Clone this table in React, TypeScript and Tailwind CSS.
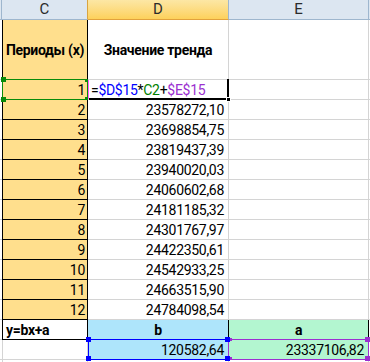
import React from "react";

const dVals = [
  "",
  "23578272,10",
  "23698854,75",
  "23819437,39",
  "23940020,03",
  "24060602,68",
  "24181185,32",
  "24301767,97",
  "24422350,61",
  "24542933,25",
  "24663515,90",
  "24784098,54",
];

function DataRow({ n, d }: { n: number; d: string }) {
  return (
    <div className="flex h-[20px]">
      <div className="w-[2px] shrink-0 border-b border-[#d4d4d4]" />
      <div className="w-[86px] shrink-0 bg-[#ffdf8d] border-l border-r border-b border-black flex items-center justify-end pr-[2px]">
        {n}
      </div>
      <div className="w-[141px] shrink-0 border-r border-b border-[#d4d4d4] flex items-center justify-end pr-[4px]">
        {d}
      </div>
      <div className="w-[140px] shrink-0 border-r border-b border-[#d4d4d4]" />
      <div className="w-[1px] shrink-0 border-b border-[#d4d4d4]" />
    </div>
  );
}

export default function App() {
  return (
    <div className="relative w-[370px] h-[362px] overflow-hidden bg-white text-black font-['Roboto',sans-serif] text-[14px] tracking-[-0.3px] leading-none">
      {/* column headers */}
      <div className="flex h-[20px] text-[#2b2b2b] text-[15px] tracking-normal">
        <div className="w-[2px] shrink-0 bg-[#dce6f1] border-r border-b border-[#9eb6ce]" />
        <div className="w-[86px] shrink-0 bg-[#dce6f1] border-b border-r border-b-[#9eb6ce] border-r-[#d9a441] flex items-center justify-center">
          C
        </div>
        <div className="w-[141px] shrink-0 bg-gradient-to-b from-[#fce7a4] to-[#fdd15a] border-b border-r border-b-[#e2a23c] border-r-[#9eb6ce] flex items-center justify-center">
          D
        </div>
        <div className="w-[140px] shrink-0 bg-[#dce6f1] border-b border-r border-[#9eb6ce] flex items-center justify-center">
          E
        </div>
        <div className="w-[1px] shrink-0 bg-[#dce6f1] border-b border-[#9eb6ce]" />
      </div>

      {/* title row */}
      <div className="flex h-[60px] font-bold">
        <div className="w-[2px] shrink-0 border-b border-[#d4d4d4]" />
        <div className="w-[86px] shrink-0 bg-[#ffdf8d] border-l border-r border-b border-black flex items-center justify-center whitespace-nowrap">
          Периоды (x)
        </div>
        <div className="w-[141px] shrink-0 border-r border-b border-[#d4d4d4] flex items-center justify-center whitespace-nowrap">
          Значение тренда
        </div>
        <div className="w-[140px] shrink-0 border-r border-b border-[#d4d4d4]" />
        <div className="w-[1px] shrink-0 border-b border-[#d4d4d4]" />
      </div>

      {/* row 1 with formula */}
      <div className="flex h-[20px]">
        <div className="w-[2px] shrink-0 border-b border-[#d4d4d4]" />
        <div className="w-[86px] shrink-0 bg-[#ffdf8d] border-l border-r border-b border-black flex items-center justify-end pr-[2px]">
          1
        </div>
        <div className="w-[141px] shrink-0 border-r border-b border-[#d4d4d4] flex items-center pl-[3px] whitespace-nowrap">
          <span>=</span>
          <span className="text-[#0000ff]">$D$15</span>
          <span>*</span>
          <span className="text-[#008000]">C2</span>
          <span>+</span>
          <span className="text-[#9b30d0]">$E$15</span>
        </div>
        <div className="w-[140px] shrink-0 border-r border-b border-[#d4d4d4]" />
        <div className="w-[1px] shrink-0 border-b border-[#d4d4d4]" />
      </div>

      {dVals.slice(1).map((d, i) => (
        <DataRow key={i} n={i + 2} d={d} />
      ))}

      {/* y=bx+a row */}
      <div className="flex h-[20px] font-bold">
        <div className="w-[2px] shrink-0 border-b border-[#d4d4d4]" />
        <div className="w-[86px] shrink-0 border-l border-r border-b border-black flex items-center pl-[3px]">
          y=bx+a
        </div>
        <div className="w-[141px] shrink-0 bg-[#aee5fb] border-r border-b border-black flex items-center justify-center">
          b
        </div>
        <div className="w-[140px] shrink-0 bg-[#b3f6d0] border-r border-b border-black flex items-center justify-center">
          a
        </div>
        <div className="w-[1px] shrink-0 border-b border-[#d4d4d4]" />
      </div>

      {/* result row */}
      <div className="flex h-[20px]">
        <div className="w-[2px] shrink-0 border-b border-[#d4d4d4]" />
        <div className="w-[86px] shrink-0 border-l border-r border-b border-[#d4d4d4]" />
        <div className="w-[141px] shrink-0 bg-[#aee5fb] border-r border-b border-[#d4d4d4] flex items-center justify-end pr-[4px]">
          120582,64
        </div>
        <div className="w-[140px] shrink-0 bg-[#b3f6d0] border-r border-b border-[#d4d4d4] flex items-center justify-end pr-[4px]">
          23337106,82
        </div>
        <div className="w-[1px] shrink-0 border-b border-[#d4d4d4]" />
      </div>
      <div className="flex h-[2px]">
        <div className="w-[2px] shrink-0" />
        <div className="w-[86px] shrink-0 border-l border-r border-[#d4d4d4]" />
        <div className="w-[141px] shrink-0 border-r border-[#d4d4d4]" />
        <div className="w-[140px] shrink-0 border-r border-[#d4d4d4]" />
      </div>

      {/* C2 reference highlight (green) */}
      <div className="absolute left-[2px] top-[79px] w-[86px] h-[21px] border border-[#0a8a0a]" />
      <div className="absolute left-[1px] top-[77px] w-[5px] h-[5px] bg-[#0a8a0a]" />
      <div className="absolute left-[1px] top-[97px] w-[5px] h-[5px] bg-[#0a8a0a]" />
      <div className="absolute left-[85px] top-[79px] w-[3px] h-[3px] bg-[#0a8a0a]" />
      <div className="absolute left-[85px] top-[97px] w-[3px] h-[3px] bg-[#0a8a0a]" />
      {/* pink edit line */}
      <div className="absolute left-[88px] top-[80px] w-[1px] h-[19px] bg-[#ff5cff]" />

      {/* active cell border */}
      <div className="absolute left-[227px] top-[79px] w-[2px] h-[21px] bg-black" />
      <div className="absolute left-[89px] top-[98px] w-[140px] h-[2px] bg-black" />
      <div className="absolute left-[226px] top-[97px] w-[5px] h-[5px] bg-black border border-white" />

      {/* $D$15 reference (blue) */}
      <div className="absolute left-[88px] top-[339px] w-[141px] h-[21px] border border-[#0000ff]" />
      {/* $E$15 reference (purple) */}
      <div className="absolute left-[228px] top-[339px] w-[141px] h-[21px] border border-[#9b30d0]" />
      <div className="absolute left-[229px] top-[338px] w-[3px] h-[3px] bg-[#9b30d0]" />
      <div className="absolute left-[229px] top-[357px] w-[3px] h-[3px] bg-[#9b30d0]" />
      <div className="absolute left-[365px] top-[337px] w-[5px] h-[5px] bg-[#9b30d0]" />
      <div className="absolute left-[365px] top-[356px] w-[5px] h-[5px] bg-[#9b30d0]" />
      <div className="absolute left-[86px] top-[337px] w-[5px] h-[5px] bg-[#0000ff]" />
      <div className="absolute left-[86px] top-[356px] w-[5px] h-[5px] bg-[#0000ff]" />
      <div className="absolute left-[225px] top-[337px] w-[5px] h-[5px] bg-[#0000ff]" />
      <div className="absolute left-[225px] top-[356px] w-[5px] h-[5px] bg-[#0000ff]" />
    </div>
  );
}
